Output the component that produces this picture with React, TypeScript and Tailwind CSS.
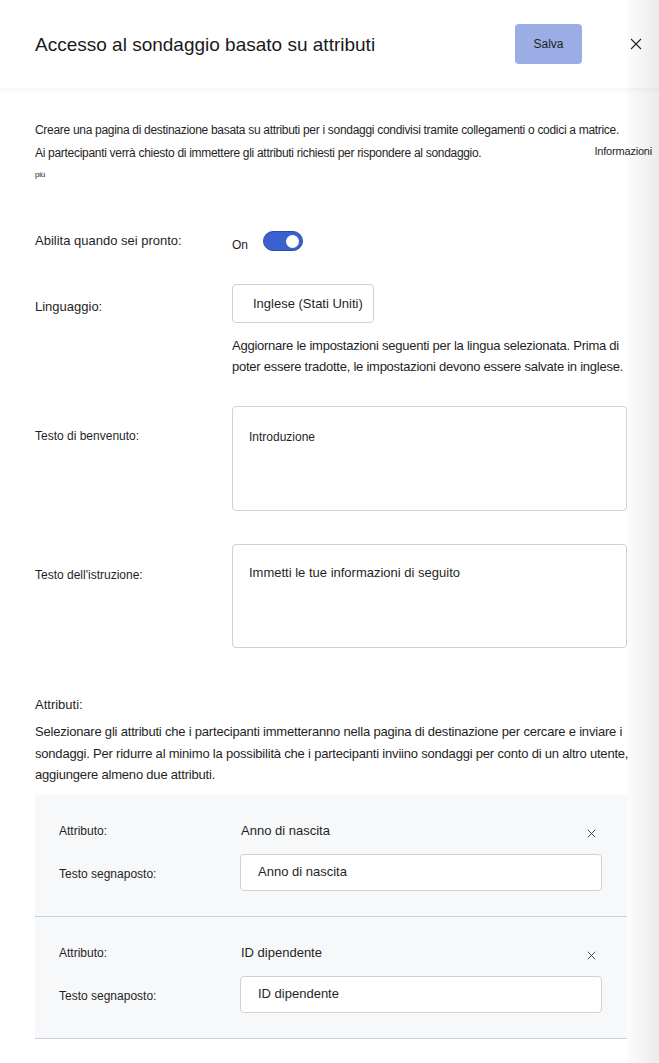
import React from 'react';

const font = { fontFamily: '"Liberation Sans", Arial, sans-serif' };

function CloseIcon({ size = 12 }: { size?: number }) {
  return (
    <svg width={size} height={size} viewBox="0 0 12 12" fill="none">
      <path d="M1 1L11 11M11 1L1 11" stroke="#242424" strokeWidth="1.1" />
    </svg>
  );
}

function AttributeRow({ name, placeholder }: { name: string; placeholder: string }) {
  return (
    <div className="flex flex-col gap-[13px] border-b border-[#c9d1db] pb-[25px] pl-[24px] pr-[25px] pt-[26px]">
      <div className="flex h-[20px] items-center">
        <div className="w-[182px] text-[12px] text-[#1f1f1f]">Attributo:</div>
        <div className="flex-1 text-[13px] text-[#1f1f1f]">{name}</div>
        <div className="mr-[6px] mt-[5px]">
          <CloseIcon size={9} />
        </div>
      </div>
      <div className="flex items-center">
        <div className="w-[181px] pt-[4px] text-[12px] text-[#1f1f1f]">Testo segnaposto:</div>
        <div className="flex h-[37px] flex-1 items-center rounded-[4px] border border-[#d1d1d1] bg-white pl-[17px] text-[13px] text-[#1f1f1f]">
          {placeholder}
        </div>
      </div>
    </div>
  );
}

export default function App() {
  return (
    <div className="relative min-h-screen overflow-hidden bg-white text-[#1f1f1f]" style={font}>
      {/* header */}
      <div className="relative z-10 flex h-[88px] items-center bg-white pl-[35px] shadow-[0_2px_5px_rgba(0,0,0,0.05)]">
        <h1 className="flex-1 text-[19px] leading-none text-[#1a1a1a]">Accesso al sondaggio basato su attributi</h1>
        <button className="flex h-[40px] w-[67px] items-center justify-center rounded-[4px] bg-[#9aade5] text-[12px] text-[#1f1f1f]">
          Salva
        </button>
        <div className="ml-[48px] mr-[17px] flex h-[12px] w-[12px] items-center justify-center">
          <CloseIcon />
        </div>
      </div>

      <div className="px-[35px]">
        {/* intro */}
        <div className="mr-[-30px] pt-[32px] text-[12px] leading-[21px] tracking-[-0.3px]">
          <p className="whitespace-nowrap">Creare una pagina di destinazione basata su attributi per i sondaggi condivisi tramite collegamenti o codici a matrice.</p>
          <div className="flex items-center">
            <p className="flex-1">Ai partecipanti verrà chiesto di immettere gli attributi richiesti per rispondere al sondaggio.</p>
            <span className="mr-[2px] pb-[4px] text-[11px] tracking-[-0.2px]">Informazioni</span>
          </div>
          <p className="text-[8px] leading-[18px] text-[#1f1f1f]">più</p>
        </div>

        {/* enable */}
        <div className="mt-[44px] flex items-center">
          <div className="w-[197px] text-[13px]">Abilita quando sei pronto:</div>
          <span className="mt-[8px] text-[12px]">On</span>
          <div className="ml-[15px] flex h-[20px] w-[40px] items-center justify-end rounded-full border border-[#2f4c9e] bg-[#3a61d0] pr-[3px]">
            <div className="h-[13px] w-[13px] rounded-full bg-white" />
          </div>
        </div>

        {/* language */}
        <div className="mt-[30px] flex items-center">
          <div className="w-[197px] shrink-0 pt-[7px] text-[13px]">Linguaggio:</div>
          <div className="flex h-[39px] w-[142px] items-center rounded-[4px] border border-[#d1d1d1] pl-[20px] text-[13px]">
            Inglese (Stati Uniti)
          </div>
        </div>
        <div className="ml-[197px] mr-[-20px] mt-[12px] text-[13px] leading-[21px] tracking-[-0.25px]">
          Aggiornare le impostazioni seguenti per la lingua selezionata. Prima di poter essere tradotte, le impostazioni devono essere salvate in inglese.
        </div>

        {/* welcome */}
        <div className="mt-[29px] flex">
          <div className="w-[197px] shrink-0 pt-[20px] text-[12px] leading-[20px]">Testo di benvenuto:</div>
          <div className="h-[105px] w-[395px] shrink-0 rounded-[4px] border border-[#d1d1d1] pl-[16px] pt-[20px] text-[12px] leading-[20px]">
            Introduzione
          </div>
        </div>

        {/* instruction */}
        <div className="mt-[33px] flex">
          <div className="w-[197px] shrink-0 pt-[21px] text-[12px] leading-[20px]">Testo dell'istruzione:</div>
          <div className="h-[104px] w-[395px] shrink-0 rounded-[4px] border border-[#d1d1d1] pl-[16px] pt-[18px] text-[13px] leading-[20px]">
            Immetti le tue informazioni di seguito
          </div>
        </div>

        {/* attributes */}
        <div className="mt-[47px] text-[13px] leading-[20px]">Attributi:</div>
        <p className="mt-[6px] w-[596px] text-[13px] leading-[21.5px] tracking-[-0.2px]">
          Selezionare gli attributi che i partecipanti immetteranno nella pagina di destinazione per cercare e inviare i sondaggi. Per ridurre al minimo la possibilità che i partecipanti inviino sondaggi per conto di un altro utente, aggiungere almeno due attributi.
        </p>

        <div className="mt-[9px] w-[592px] bg-[#f7f8fa]">
          <AttributeRow name="Anno di nascita" placeholder="Anno di nascita" />
          <AttributeRow name="ID dipendente" placeholder="ID dipendente" />
        </div>
      </div>

      {/* right edge shade */}
      <div className="pointer-events-none absolute right-0 top-0 z-20 h-full w-[32px] bg-gradient-to-r from-[rgba(0,0,0,0.01)] to-[rgba(0,0,0,0.08)]" />
    </div>
  );
}
